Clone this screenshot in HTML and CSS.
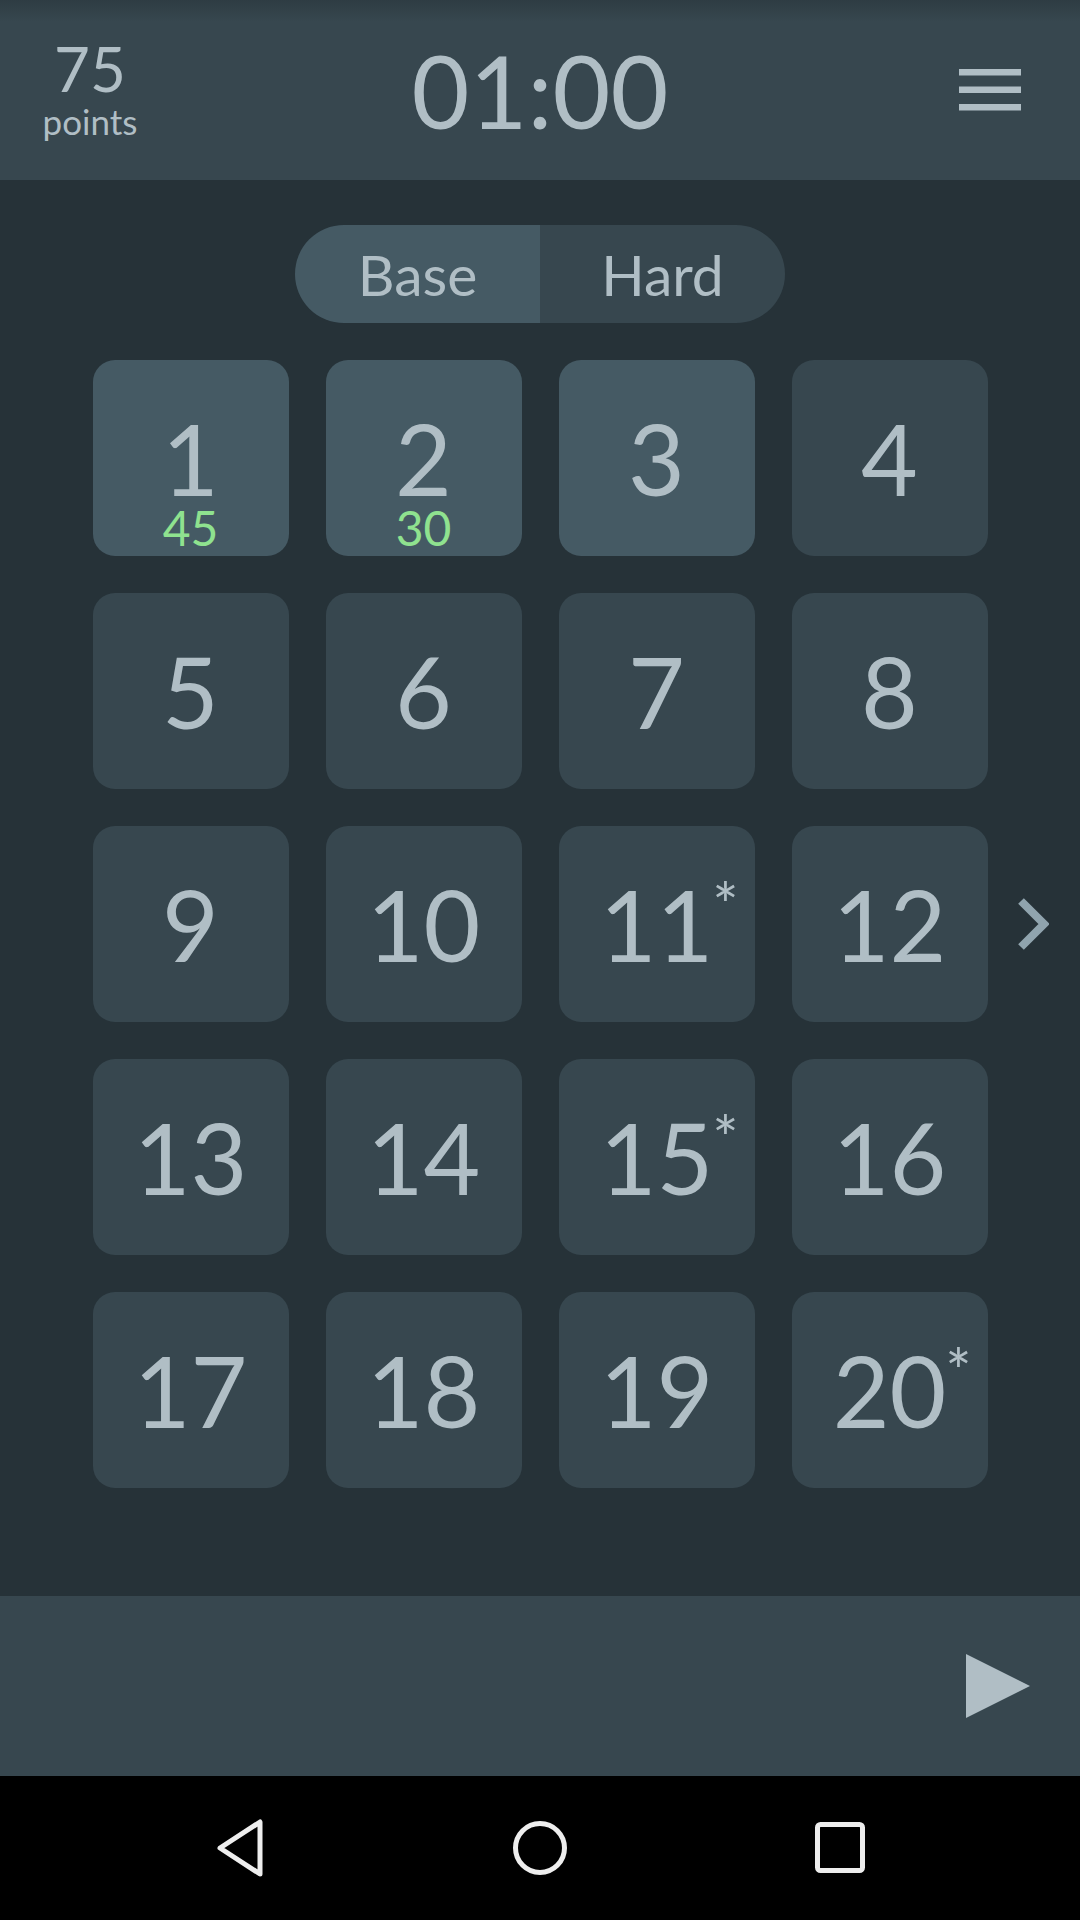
FILE: index.html
```html
<!DOCTYPE html>
<html lang="en">
<head>
    <meta charset="UTF-8">
    <meta name="viewport" content="width=device-width, initial-scale=1.0">
    <title>Levels</title>
    <link rel="stylesheet" href="styles.css">
</head>
<body>
    <header class="topbar">
        <div class="score">
            <span class="score-value">75</span>
            <span class="score-label">points</span>
        </div>
        <div class="timer">01:00</div>
        <div class="menu">
            <svg width="62" height="42" viewBox="0 0 62 42">
                <rect x="0" y="0" width="62" height="6.5" fill="#b0bec5"/>
                <rect x="0" y="17.5" width="62" height="6.5" fill="#b0bec5"/>
                <rect x="0" y="35" width="62" height="6.5" fill="#b0bec5"/>
            </svg>
        </div>
    </header>

    <main class="board">
        <div class="mode-toggle">
            <button class="mode mode-active">Base</button>
            <button class="mode">Hard</button>
        </div>

        <div class="levels-wrap">
            <div class="levels">
                <div class="level level-open"><span class="level-num">1</span><span class="level-score">45</span></div>
                <div class="level level-open"><span class="level-num">2</span><span class="level-score">30</span></div>
                <div class="level level-open"><span class="level-num">3</span></div>
                <div class="level"><span class="level-num">4</span></div>

                <div class="level"><span class="level-num">5</span></div>
                <div class="level"><span class="level-num">6</span></div>
                <div class="level"><span class="level-num">7</span></div>
                <div class="level"><span class="level-num">8</span></div>

                <div class="level"><span class="level-num">9</span></div>
                <div class="level"><span class="level-num">10</span></div>
                <div class="level"><span class="level-num">11<span class="level-star">*</span></span></div>
                <div class="level"><span class="level-num">12</span></div>

                <div class="level"><span class="level-num">13</span></div>
                <div class="level"><span class="level-num">14</span></div>
                <div class="level"><span class="level-num">15<span class="level-star">*</span></span></div>
                <div class="level"><span class="level-num">16</span></div>

                <div class="level"><span class="level-num">17</span></div>
                <div class="level"><span class="level-num">18</span></div>
                <div class="level"><span class="level-num">19</span></div>
                <div class="level"><span class="level-num">20<span class="level-star">*</span></span></div>
            </div>
            <!-- next page arrow -->
            <svg class="next-page" width="32" height="54" viewBox="0 0 32 54">
                <polyline points="4,4 27,27 4,50" fill="none" stroke="#90a4ae" stroke-width="8"/>
            </svg>
        </div>
    </main>

    <footer class="playbar">
        <svg class="play" width="64" height="64" viewBox="0 0 64 64">
            <polygon points="0,0 64,32 0,64" fill="#b0bec5"/>
        </svg>
    </footer>

    <nav class="navbar">
        <div class="nav-btn">
            <svg width="52" height="60" viewBox="0 0 52 60">
                <path d="M46 4 L46 56 L6 30 Z" fill="none" stroke="#eeeeee" stroke-width="5" stroke-linejoin="round"/>
            </svg>
        </div>
        <div class="nav-btn">
            <svg width="56" height="56" viewBox="0 0 56 56">
                <circle cx="28" cy="28" r="24.5" fill="none" stroke="#eeeeee" stroke-width="5"/>
            </svg>
        </div>
        <div class="nav-btn">
            <svg width="50" height="52" viewBox="0 0 50 52">
                <rect x="2.5" y="2.5" width="45" height="46" rx="3" fill="none" stroke="#eeeeee" stroke-width="5"/>
            </svg>
        </div>
    </nav>
</body>
</html>
```

FILE: styles.css
```css
body {
    margin: 0;
    width: 1080px;
    height: 1920px;
    display: flex;
    flex-direction: column;
    background-color: #263238;
    color: #b0bec5;
    font-family: Lato, "Liberation Sans", sans-serif;
}

/* top bar */
.topbar {
    height: 180px;
    flex-shrink: 0;
    display: flex;
    align-items: center;
    background: linear-gradient(#2e3c43 0, #37474f 22px);
}
.score {
    width: 180px;
    align-self: flex-start;
    padding-top: 37px;
    display: flex;
    flex-direction: column;
    align-items: center;
}
.score-value {
    font-size: 62px;
    line-height: 62px;
}
.score-label {
    margin-top: 5px;
    font-size: 35px;
    line-height: 35px;
}
.timer {
    flex: 1;
    text-align: center;
    font-size: 100px;
    line-height: 100px;
}
.menu {
    width: 180px;
    display: flex;
    justify-content: center;
}
.menu svg {
    display: block;
}

/* level board */
.board {
    flex: 1;
    padding-top: 45px;
}
.mode-toggle {
    width: 490px;
    height: 98px;
    margin: 0 auto 37px;
    display: flex;
    border-radius: 49px;
    overflow: hidden;
}
.mode {
    flex: 1;
    padding: 0;
    border: none;
    background-color: #37474f;
    color: #b0bec5;
    font-family: inherit;
    font-size: 57px;
    line-height: 98px;
}
.mode-active {
    background-color: #455a64;
}
.levels-wrap {
    position: relative;
}
.levels {
    display: grid;
    grid-template-columns: repeat(4, 196px);
    grid-auto-rows: 196px;
    gap: 37px;
    justify-content: center;
}
.level {
    position: relative;
    display: flex;
    align-items: center;
    justify-content: center;
    background-color: #37474f;
    border-radius: 22px;
}
.level-open {
    background-color: #455a64;
}
.level-num {
    position: relative;
    font-size: 98px;
    line-height: 98px;
}
.level-star {
    position: absolute;
    left: calc(100% - 1px);
    top: -2px;
    font-size: 62px;
    line-height: 62px;
}
.level-score {
    position: absolute;
    left: 0;
    right: 0;
    bottom: 8px;
    text-align: center;
    font-size: 48px;
    line-height: 40px;
    color: #8fe28f;
}
.next-page {
    position: absolute;
    right: 31px;
    top: 50%;
    transform: translateY(-50%);
}

/* bottom bars */
.playbar {
    height: 180px;
    flex-shrink: 0;
    display: flex;
    align-items: center;
    justify-content: flex-end;
    padding-right: 50px;
    background-color: #37474f;
}
.navbar {
    height: 144px;
    flex-shrink: 0;
    display: flex;
    align-items: center;
    justify-content: center;
    gap: 180px;
    background-color: #000;
}
.nav-btn {
    width: 120px;
    display: flex;
    justify-content: center;
}
.nav-btn svg {
    display: block;
}
```
